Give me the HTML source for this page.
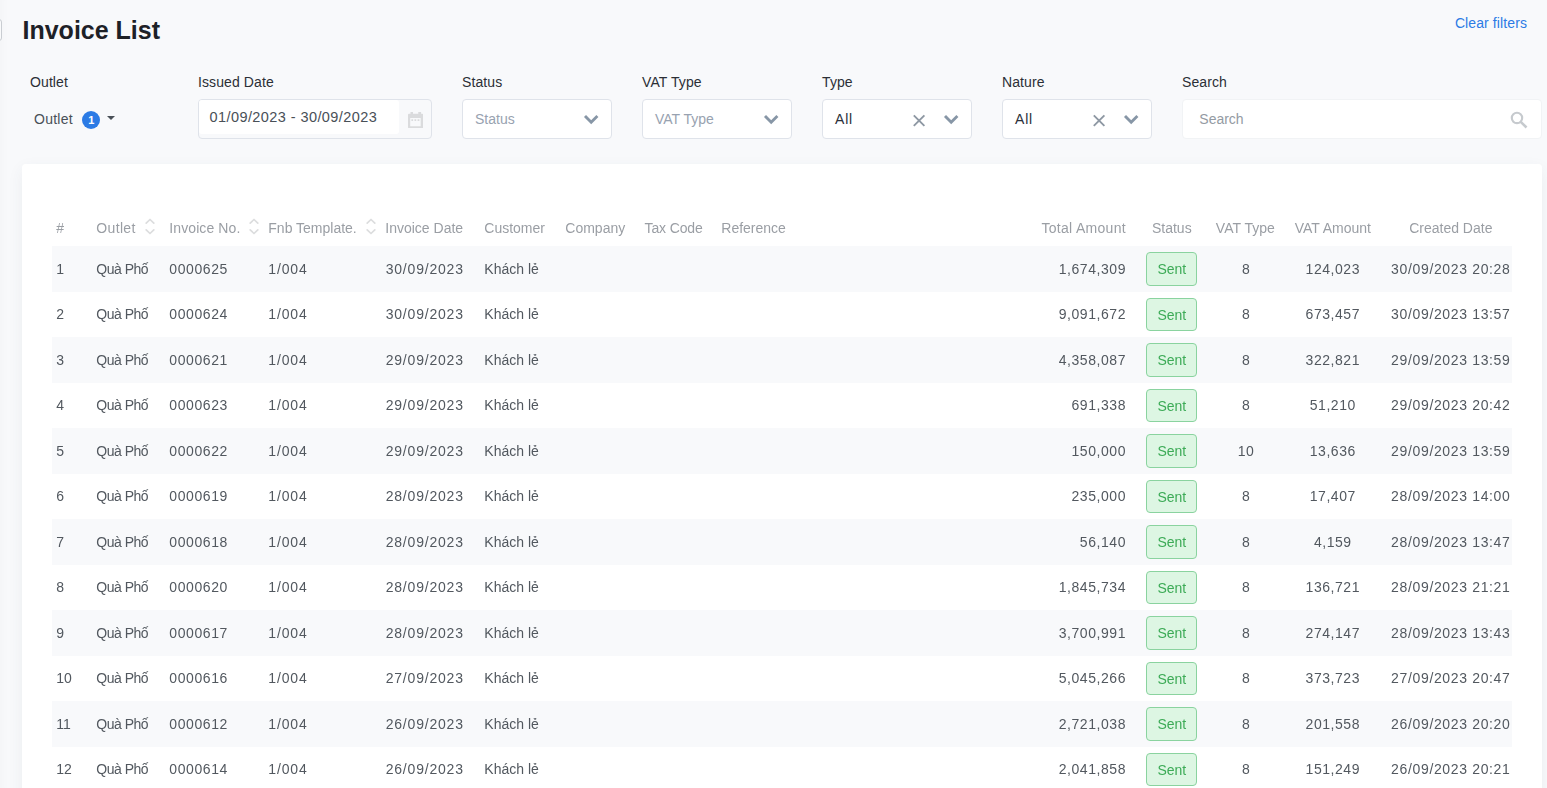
<!DOCTYPE html><html><head><meta charset="utf-8"><title>Invoice List</title><style>
*{box-sizing:border-box}
html,body{margin:0;padding:0}
body{width:1547px;height:788px;overflow:hidden;position:relative;background:#f8f9fb;font-family:"Liberation Sans",sans-serif;font-size:14px;color:#495057;box-shadow:inset 9px 0 9px -6px rgba(0,0,0,.02)}
.edge{position:absolute;left:-6px;top:19px;width:8px;height:22px;border:1px solid #c9cdd2;border-radius:3px;background:#f9fafb}
h1{position:absolute;left:22.5px;top:15.4px;margin:0;font-size:25px;line-height:30px;font-weight:bold;color:#1d2127;white-space:nowrap}
.clear{position:absolute;right:20px;top:14px;letter-spacing:.1px;line-height:18px;color:#2c7be5;font-size:14px;white-space:nowrap}
.lbl{position:absolute;top:73px;line-height:18px;font-size:14px;color:#2b2f36;white-space:nowrap}
.sel{position:absolute;top:99px;width:150px;height:40px;background:#fff;border:1px solid #dfe3ea;border-radius:4px}
.sel .txt{position:absolute;left:12px;top:0;line-height:38px;white-space:nowrap}
.sel .ph{color:#98a2b0}
.sel .val{color:#2b2f3a}
.sel svg{position:absolute}
.card{will-change:transform;position:absolute;left:22px;top:164px;width:1520px;height:700px;background:#fff;border-radius:4px;box-shadow:0 5px 16px rgba(60,70,90,.065)}
.thead,.tr{position:absolute;left:30.3px;width:1459.7px}
.thead{top:47.2px;height:34px;color:#9a9ea4}
.tr{height:45.5px}
.tr.odd{background:#f8f9fb}
.c{position:absolute;top:0;height:100%;display:flex;align-items:center;white-space:nowrap}
.thead .c{padding-top:0}
.sort{margin-left:9px;flex:none;position:relative;top:-1.7px}
.c1{left:4px}.c2{left:44px}.c3{left:117px}.c4{left:216px}.c5{left:333px}.c6{left:432px}.c7{left:513px}.c8{left:593px}.c9{left:669px}
.c10{right:386px;justify-content:flex-end}
.c11{left:1084px;width:71px;justify-content:center}
.c12{left:1155px;width:76px;justify-content:center}
.c13{left:1231px;width:99px;justify-content:center}
.c14{left:1337px;width:123px;justify-content:center}
.num{letter-spacing:.55px}
.badge{display:block;width:51px;height:33.5px;line-height:33px;text-align:center;background:#ddf6e3;border:1px solid #8ad39f;border-radius:4px;color:#3dab57;letter-spacing:0}
.outlet{position:absolute;left:34px;top:108px;letter-spacing:.25px;height:22px;display:flex;align-items:center;color:#495057}
.bdg{display:block;width:18px;height:18px;border-radius:9px;background:#2c7be5;color:#fff;font-style:normal;font-size:11px;font-weight:bold;line-height:18px;text-align:center;margin-left:9.5px;letter-spacing:0;position:relative;top:.5px}
.caret{display:block;width:0;height:0;border-left:4px solid transparent;border-right:4px solid transparent;border-top:4.5px solid #495057;margin-left:6.7px;margin-top:-2px}
.date{position:absolute;left:198px;top:99px;width:234px;height:40px;border:1px solid #dfe3ea;border-radius:4px;background:#f8f9fb}
.din{position:absolute;left:0;top:0;width:200px;height:34px;background:#fff;border-radius:3px;padding-left:10.5px;line-height:34px;font-size:14.5px;letter-spacing:.42px;color:#495057;white-space:nowrap}
.search{position:absolute;left:1182px;top:99px;width:360px;height:40px;background:#fff;border:1px solid #f1f3f5;border-radius:4px}
.search span{position:absolute;left:16.3px;top:0;line-height:39.4px;color:#949ba3}

.c2{letter-spacing:-.3px}
.thead .c2{letter-spacing:.35px}
.thead .c3{letter-spacing:.1px}
.thead .c10{letter-spacing:.3px}
.tr .c12{padding-left:1.5px}
.sel .val{letter-spacing:.8px}
.tr .c2{letter-spacing:-.5px}
.tr .c3{letter-spacing:.6px}
.tr .c4{letter-spacing:.85px}
.tr .c5{letter-spacing:.8px;margin-left:.4px}
.lbl{letter-spacing:.1px}
.tr{color:#52585f}
.tr .c14{letter-spacing:.65px}
.thead .c8{letter-spacing:-.15px;margin-left:-.7px}

</style></head><body>
<div class="edge"></div>
<h1>Invoice List</h1>
<div class="clear">Clear filters</div>
<div class="lbl" style="left:30px">Outlet</div>
<div class="lbl" style="left:198px">Issued Date</div>
<div class="lbl" style="left:462px">Status</div>
<div class="lbl" style="left:642px">VAT Type</div>
<div class="lbl" style="left:822px">Type</div>
<div class="lbl" style="left:1002px">Nature</div>
<div class="lbl" style="left:1182px">Search</div>
<div class="outlet"><span>Outlet</span><i class="bdg">1</i><b class="caret"></b></div>
<div class="date"><div class="din">01/09/2023 - 30/09/2023</div>
<svg width="15.2" height="16.2" viewBox="0 0 15.2 16.2" style="position:absolute;left:208.6px;top:11.8px"><path d="M2.5 0h2.5v1.7h5.3V0h2.8v1.7h1.1a1 1 0 0 1 1 1v12.5a1 1 0 0 1-1 1H1a1 1 0 0 1-1-1V2.7a1 1 0 0 1 1-1h1.5z M2.2 6.1v8.1h10.5V6.1z M3.4 7.2h1.7v1.7H3.4zM6.5 7.2h1.7v1.7H6.5zM9.6 7.2h1.8v1.7H9.6z" fill="#dadbdd" fill-rule="evenodd"/></svg></div>
<div class="sel" style="left:462px"><span class="txt ph">Status</span><svg class="chev" width="17" height="12" viewBox="0 0 17 12" style="left:120.3px;top:14.4px"><path d="M2 2 L8.2 8.2 L14.4 2" fill="none" stroke="#8796a6" stroke-width="2.9" stroke-linecap="butt"/></svg></div>
<div class="sel" style="left:642px"><span class="txt ph">VAT Type</span><svg class="chev" width="17" height="12" viewBox="0 0 17 12" style="left:120.3px;top:14.4px"><path d="M2 2 L8.2 8.2 L14.4 2" fill="none" stroke="#8796a6" stroke-width="2.9"/></svg></div>
<div class="sel" style="left:822px"><span class="txt val">All</span><svg width="14" height="14" viewBox="0 0 14 14" style="left:89px;top:14px"><path d="M1.8 1.3 L12.4 11.9 M12.4 1.3 L1.8 11.9" fill="none" stroke="#8e98a3" stroke-width="1.9"/></svg><svg class="chev" width="17" height="12" viewBox="0 0 17 12" style="left:120.3px;top:14.4px"><path d="M2 2 L8.2 8.2 L14.4 2" fill="none" stroke="#8796a6" stroke-width="2.9"/></svg></div>
<div class="sel" style="left:1002px"><span class="txt val">All</span><svg width="14" height="14" viewBox="0 0 14 14" style="left:89px;top:14px"><path d="M1.8 1.3 L12.4 11.9 M12.4 1.3 L1.8 11.9" fill="none" stroke="#8e98a3" stroke-width="1.9"/></svg><svg class="chev" width="17" height="12" viewBox="0 0 17 12" style="left:120.3px;top:14.4px"><path d="M2 2 L8.2 8.2 L14.4 2" fill="none" stroke="#8796a6" stroke-width="2.9"/></svg></div>
<div class="search"><span>Search</span><svg width="18" height="18" viewBox="0 0 17 17" style="position:absolute;left:327.3px;top:11.4px"><circle cx="6.6" cy="6.6" r="4.9" fill="none" stroke="#c6cace" stroke-width="2"/><path d="M10.2 10.2 L15.6 15.6" stroke="#c6cace" stroke-width="2.4"/></svg></div>

<div class="card"><div class="thead">
<div class="c c1"><span>#</span></div>
<div class="c c2"><span>Outlet</span><svg class="sort" width="10" height="17" viewBox="0 0 10 17"><path d="M1.2 5.1 L5 1.5 L8.8 5.1 M1.2 11.9 L5 15.5 L8.8 11.9" fill="none" stroke="#dcddde" stroke-width="1.7" stroke-linecap="round" stroke-linejoin="round"/></svg></div>
<div class="c c3"><span>Invoice No.</span><svg class="sort" width="10" height="17" viewBox="0 0 10 17"><path d="M1.2 5.1 L5 1.5 L8.8 5.1 M1.2 11.9 L5 15.5 L8.8 11.9" fill="none" stroke="#dcddde" stroke-width="1.7" stroke-linecap="round" stroke-linejoin="round"/></svg></div>
<div class="c c4"><span>Fnb Template.</span><svg class="sort" width="10" height="17" viewBox="0 0 10 17"><path d="M1.2 5.1 L5 1.5 L8.8 5.1 M1.2 11.9 L5 15.5 L8.8 11.9" fill="none" stroke="#dcddde" stroke-width="1.7" stroke-linecap="round" stroke-linejoin="round"/></svg></div>
<div class="c c5"><span>Invoice Date</span></div>
<div class="c c6"><span>Customer</span></div>
<div class="c c7"><span>Company</span></div>
<div class="c c8"><span>Tax Code</span></div>
<div class="c c9"><span>Reference</span></div>
<div class="c c10"><span>Total Amount</span></div>
<div class="c c11"><span>Status</span></div>
<div class="c c12"><span>VAT Type</span></div>
<div class="c c13"><span>VAT Amount</span></div>
<div class="c c14"><span>Created Date</span></div>
</div>
<div class="tr odd" style="top:82.20px"><div class="c c1">1</div><div class="c c2">Quà Phố</div><div class="c c3 num">0000625</div><div class="c c4 num">1/004</div><div class="c c5 num">30/09/2023</div><div class="c c6">Khách lẻ</div><div class="c c7"></div><div class="c c8"></div><div class="c c9"></div><div class="c c10 num">1,674,309</div><div class="c c11"><span class="badge">Sent</span></div><div class="c c12 num">8</div><div class="c c13 num">124,023</div><div class="c c14 num">30/09/2023 20:28</div></div>
<div class="tr" style="top:127.70px"><div class="c c1">2</div><div class="c c2">Quà Phố</div><div class="c c3 num">0000624</div><div class="c c4 num">1/004</div><div class="c c5 num">30/09/2023</div><div class="c c6">Khách lẻ</div><div class="c c7"></div><div class="c c8"></div><div class="c c9"></div><div class="c c10 num">9,091,672</div><div class="c c11"><span class="badge">Sent</span></div><div class="c c12 num">8</div><div class="c c13 num">673,457</div><div class="c c14 num">30/09/2023 13:57</div></div>
<div class="tr odd" style="top:173.20px"><div class="c c1">3</div><div class="c c2">Quà Phố</div><div class="c c3 num">0000621</div><div class="c c4 num">1/004</div><div class="c c5 num">29/09/2023</div><div class="c c6">Khách lẻ</div><div class="c c7"></div><div class="c c8"></div><div class="c c9"></div><div class="c c10 num">4,358,087</div><div class="c c11"><span class="badge">Sent</span></div><div class="c c12 num">8</div><div class="c c13 num">322,821</div><div class="c c14 num">29/09/2023 13:59</div></div>
<div class="tr" style="top:218.70px"><div class="c c1">4</div><div class="c c2">Quà Phố</div><div class="c c3 num">0000623</div><div class="c c4 num">1/004</div><div class="c c5 num">29/09/2023</div><div class="c c6">Khách lẻ</div><div class="c c7"></div><div class="c c8"></div><div class="c c9"></div><div class="c c10 num">691,338</div><div class="c c11"><span class="badge">Sent</span></div><div class="c c12 num">8</div><div class="c c13 num">51,210</div><div class="c c14 num">29/09/2023 20:42</div></div>
<div class="tr odd" style="top:264.20px"><div class="c c1">5</div><div class="c c2">Quà Phố</div><div class="c c3 num">0000622</div><div class="c c4 num">1/004</div><div class="c c5 num">29/09/2023</div><div class="c c6">Khách lẻ</div><div class="c c7"></div><div class="c c8"></div><div class="c c9"></div><div class="c c10 num">150,000</div><div class="c c11"><span class="badge">Sent</span></div><div class="c c12 num">10</div><div class="c c13 num">13,636</div><div class="c c14 num">29/09/2023 13:59</div></div>
<div class="tr" style="top:309.70px"><div class="c c1">6</div><div class="c c2">Quà Phố</div><div class="c c3 num">0000619</div><div class="c c4 num">1/004</div><div class="c c5 num">28/09/2023</div><div class="c c6">Khách lẻ</div><div class="c c7"></div><div class="c c8"></div><div class="c c9"></div><div class="c c10 num">235,000</div><div class="c c11"><span class="badge">Sent</span></div><div class="c c12 num">8</div><div class="c c13 num">17,407</div><div class="c c14 num">28/09/2023 14:00</div></div>
<div class="tr odd" style="top:355.20px"><div class="c c1">7</div><div class="c c2">Quà Phố</div><div class="c c3 num">0000618</div><div class="c c4 num">1/004</div><div class="c c5 num">28/09/2023</div><div class="c c6">Khách lẻ</div><div class="c c7"></div><div class="c c8"></div><div class="c c9"></div><div class="c c10 num">56,140</div><div class="c c11"><span class="badge">Sent</span></div><div class="c c12 num">8</div><div class="c c13 num">4,159</div><div class="c c14 num">28/09/2023 13:47</div></div>
<div class="tr" style="top:400.70px"><div class="c c1">8</div><div class="c c2">Quà Phố</div><div class="c c3 num">0000620</div><div class="c c4 num">1/004</div><div class="c c5 num">28/09/2023</div><div class="c c6">Khách lẻ</div><div class="c c7"></div><div class="c c8"></div><div class="c c9"></div><div class="c c10 num">1,845,734</div><div class="c c11"><span class="badge">Sent</span></div><div class="c c12 num">8</div><div class="c c13 num">136,721</div><div class="c c14 num">28/09/2023 21:21</div></div>
<div class="tr odd" style="top:446.20px"><div class="c c1">9</div><div class="c c2">Quà Phố</div><div class="c c3 num">0000617</div><div class="c c4 num">1/004</div><div class="c c5 num">28/09/2023</div><div class="c c6">Khách lẻ</div><div class="c c7"></div><div class="c c8"></div><div class="c c9"></div><div class="c c10 num">3,700,991</div><div class="c c11"><span class="badge">Sent</span></div><div class="c c12 num">8</div><div class="c c13 num">274,147</div><div class="c c14 num">28/09/2023 13:43</div></div>
<div class="tr" style="top:491.70px"><div class="c c1">10</div><div class="c c2">Quà Phố</div><div class="c c3 num">0000616</div><div class="c c4 num">1/004</div><div class="c c5 num">27/09/2023</div><div class="c c6">Khách lẻ</div><div class="c c7"></div><div class="c c8"></div><div class="c c9"></div><div class="c c10 num">5,045,266</div><div class="c c11"><span class="badge">Sent</span></div><div class="c c12 num">8</div><div class="c c13 num">373,723</div><div class="c c14 num">27/09/2023 20:47</div></div>
<div class="tr odd" style="top:537.20px"><div class="c c1">11</div><div class="c c2">Quà Phố</div><div class="c c3 num">0000612</div><div class="c c4 num">1/004</div><div class="c c5 num">26/09/2023</div><div class="c c6">Khách lẻ</div><div class="c c7"></div><div class="c c8"></div><div class="c c9"></div><div class="c c10 num">2,721,038</div><div class="c c11"><span class="badge">Sent</span></div><div class="c c12 num">8</div><div class="c c13 num">201,558</div><div class="c c14 num">26/09/2023 20:20</div></div>
<div class="tr" style="top:582.70px"><div class="c c1">12</div><div class="c c2">Quà Phố</div><div class="c c3 num">0000614</div><div class="c c4 num">1/004</div><div class="c c5 num">26/09/2023</div><div class="c c6">Khách lẻ</div><div class="c c7"></div><div class="c c8"></div><div class="c c9"></div><div class="c c10 num">2,041,858</div><div class="c c11"><span class="badge">Sent</span></div><div class="c c12 num">8</div><div class="c c13 num">151,249</div><div class="c c14 num">26/09/2023 20:21</div></div>
</div></body></html>
